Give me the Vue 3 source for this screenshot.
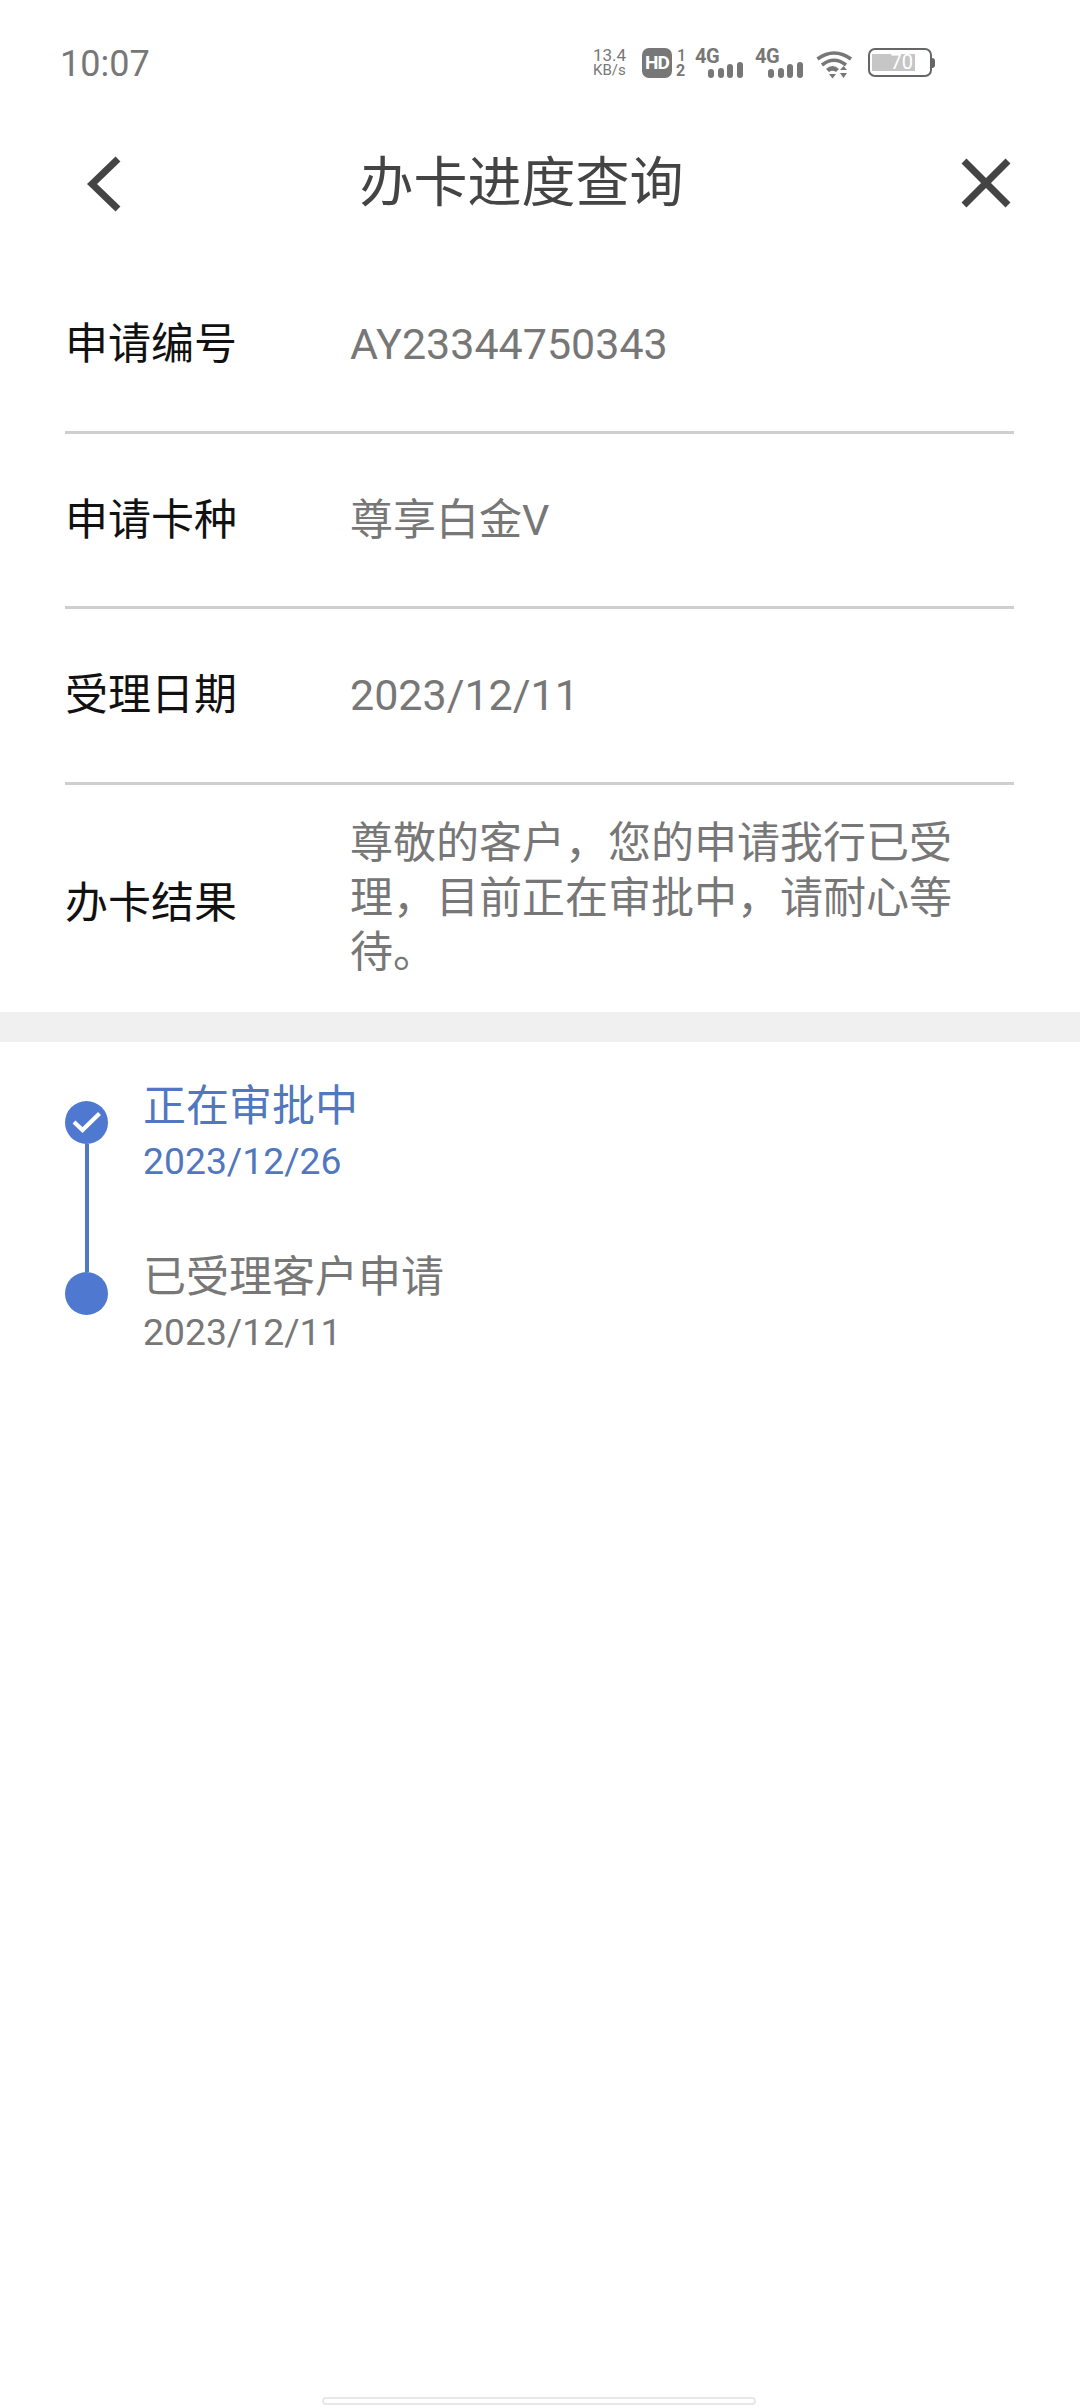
<script setup>
const rows = [
  { label: '申请编号', value: 'AY23344750343', cjk: false },
  { label: '申请卡种', value: '尊享白金V', cjk: true },
  { label: '受理日期', value: '2023/12/11', cjk: false },
]
</script>

<template>
  <div class="page">
    <div class="status">
      <span class="time">10:07</span>
      <div class="icons">
        <div class="speed"><span>13.4</span><span class="kb">KB/s</span></div>
        <span class="hd">HD</span>
        <div class="sims"><span>1</span><span class="two">2</span></div>
        <div class="net">
          <span class="g">4G</span>
          <svg class="bars" width="35" height="16" viewBox="0 0 35 16"><g fill="#777"><rect x="0" y="7" width="6" height="9" rx="3"/><rect x="10" y="6" width="6" height="10" rx="3"/><rect x="19" y="2" width="6" height="14" rx="3"/><rect x="29" y="0" width="6" height="16" rx="3"/></g></svg>
        </div>
        <div class="net">
          <span class="g">4G</span>
          <svg class="bars" width="35" height="16" viewBox="0 0 35 16"><g fill="#777"><rect x="0" y="7" width="6" height="9" rx="3"/><rect x="10" y="6" width="6" height="10" rx="3"/><rect x="19" y="2" width="6" height="14" rx="3"/><rect x="29" y="0" width="6" height="16" rx="3"/></g></svg>
        </div>
        <svg class="wifi" width="37" height="29" viewBox="0 0 37 29">
          <g fill="none" stroke="#777" stroke-width="3.6"><path d="M1.5 9 Q18 -3 35 9"/><path d="M6 15 Q18 5.500 30 15"/></g>
          <path d="M10 19 Q16.500 13 23 19 L20 22 Q16.500 19.500 13 22Z" fill="#777"/>
          <path d="M13 24 h7 l-3.500 4.500z M24 20 l3.500 -4 l3.500 4z M24 23 h7 l-3.500 5z" fill="#777"/>
        </svg>
        <div class="battery"><div class="cell"><span class="fill">70</span></div><span class="nub"></span></div>
      </div>
    </div>

    <header class="head">
      <svg class="back" width="36" height="56" viewBox="0 0 36 56"><path d="M32 3 L6 28 L32 53" transform="translate(-1 0)" fill="none" stroke="#444" stroke-width="7"/></svg>
      <h1 class="title">办卡进度查询</h1>
      <svg class="close" width="50" height="50" viewBox="0 0 50 50"><path d="M3 3 L47 47 M47 3 L3 47" fill="none" stroke="#444" stroke-width="7"/></svg>
    </header>

    <section class="form">
      <div v-for="r in rows" :key="r.label" class="row">
        <span class="label">{{ r.label }}</span>
        <span class="value" :class="{ raised: r.cjk }">{{ r.value }}</span>
      </div>
      <div class="row last">
        <span class="label lowered">办卡结果</span>
        <span class="value multi">尊敬的客户，您的申请我行已受理，目前正在审批中，请耐心等待。</span>
      </div>
    </section>

    <div class="band"></div>

    <section class="timeline">
      <div class="step current">
        <div class="rail">
          <span class="dot"><svg width="30" height="23" viewBox="0 0 30 23"><path d="M2 11 L10.500 19 L27.500 2.500" fill="none" stroke="#fff" stroke-width="4.200"/></svg></span>
          <span class="link"></span>
        </div>
        <div class="info">
          <div class="name">正在审批中</div>
          <div class="date">2023/12/26</div>
        </div>
      </div>
      <div class="step">
        <div class="rail"><span class="dot"></span></div>
        <div class="info">
          <div class="name">已受理客户申请</div>
          <div class="date">2023/12/11</div>
        </div>
      </div>
    </section>

    <div class="spacer"></div>
    <div class="home"></div>
  </div>
</template>

<style>
html, body { margin: 0; background: #fff; }
</style>

<style scoped>
.page {
  width: 1080px;
  height: 2408px;
  display: flex;
  flex-direction: column;
  background: #fff;
  font-family: Roboto, "Noto Sans CJK SC", sans-serif;
  overflow: hidden;
}
.status {
  height: 126px;
  box-sizing: border-box;
  padding: 48px 0 0 60px;
  display: flex;
  color: #777;
}
.time { font-size: 36px; line-height: 32px; width: 533px; }
.icons { display: flex; align-items: flex-start; height: 30px; }
.speed { width: 49px; display: flex; flex-direction: column; font-size: 17px; line-height: 15px; align-items: flex-start; }
.kb { font-size: 15px; line-height: 14px; }
.hd {
  width: 30px; height: 30px; border-radius: 7px; background: #777; color: #fff;
  font-size: 19px; font-weight: 700; line-height: 30px; text-align: center; letter-spacing: -1px;
}
.sims { width: 20px; margin-left: 2px; display: flex; flex-direction: column; font-size: 16px; line-height: 15px; font-weight: 500; padding-left: 3px; box-sizing: border-box; }
.two { font-weight: 700; margin-left: -1px; }
.net { width: 60px; height: 30px; display: flex; flex-direction: column; padding-left: 1px; box-sizing: border-box; }
.g { font-size: 20px; line-height: 16px; font-weight: 700; letter-spacing: -0.5px; }
.bars { margin: -2px 0 0 13px; }
.wifi { margin: 2px 15px 0 2px; }
.battery { display: flex; align-items: center; height: 29px; }
.cell { width: 64px; height: 29px; box-sizing: border-box; border: 2px solid #666; border-radius: 7px; padding: 4px 2px; display: flex; }
.fill { width: 43px; background: #c6c6c6; color: #fff; font-size: 20px; line-height: 17px; text-align: right; padding-right: 2px; box-sizing: border-box; }
.nub { width: 3px; height: 10px; background: #666; border-radius: 0 3px 3px 0; }

.head {
  height: 116px; display: flex; align-items: center;
  padding: 0 0 0 87px; margin-bottom: 16px;
}
.title { margin: 0; width: 838px; font-size: 54px; font-weight: 400; color: #444; text-align: center; line-height: 114px; padding-right: 41px; box-sizing: border-box; }
.close { flex: none; margin-top: -2px; }

.form { display: flex; flex-direction: column; margin-left: 65px; width: 949px; }
.row { height: 175.500px; box-sizing: border-box; border-bottom: 3px solid #cfcfcf; display: flex; align-items: center; }
.label { width: 285px; flex: none; font-size: 43px; color: #111; padding-bottom: 8px; }
.value { font-size: 43px; color: #777; }
.raised { padding-bottom: 8px; }
.last { height: 227px; border-bottom: 0; }
.lowered { padding-top: 2px; padding-bottom: 0; }
.multi { line-height: 54.500px; width: 610px; }

.band { height: 30px; background: #f0f0f0; flex: none; }

.timeline { display: flex; flex-direction: column; padding: 36px 0 0 65px; }
.step { display: flex; height: 171px; }
.rail { width: 78px; flex: none; display: flex; flex-direction: column; align-items: flex-start; padding-top: 23px; box-sizing: border-box; }
.dot { width: 43px; height: 43px; border-radius: 50%; background: #4f78d0; flex: none; display: flex; align-items: center; justify-content: center; }
.link { width: 4px; flex: 1; margin: 0 0 -23px 20px; background: #5177c4; }
.info { padding-top: 3px; }
.name { font-size: 43px; line-height: 50px; color: #777; }
.date { font-size: 37.300px; line-height: 42px; margin-top: 9px; color: #777; }
.current .name, .current .date { color: #5177bf; }

.spacer { flex: 1; }
.home { width: 434px; height: 8px; box-sizing: border-box; margin: 0 auto 3px; border: 2px solid #e8e8e8; border-radius: 5px; position: relative; left: -1px; }
</style>
